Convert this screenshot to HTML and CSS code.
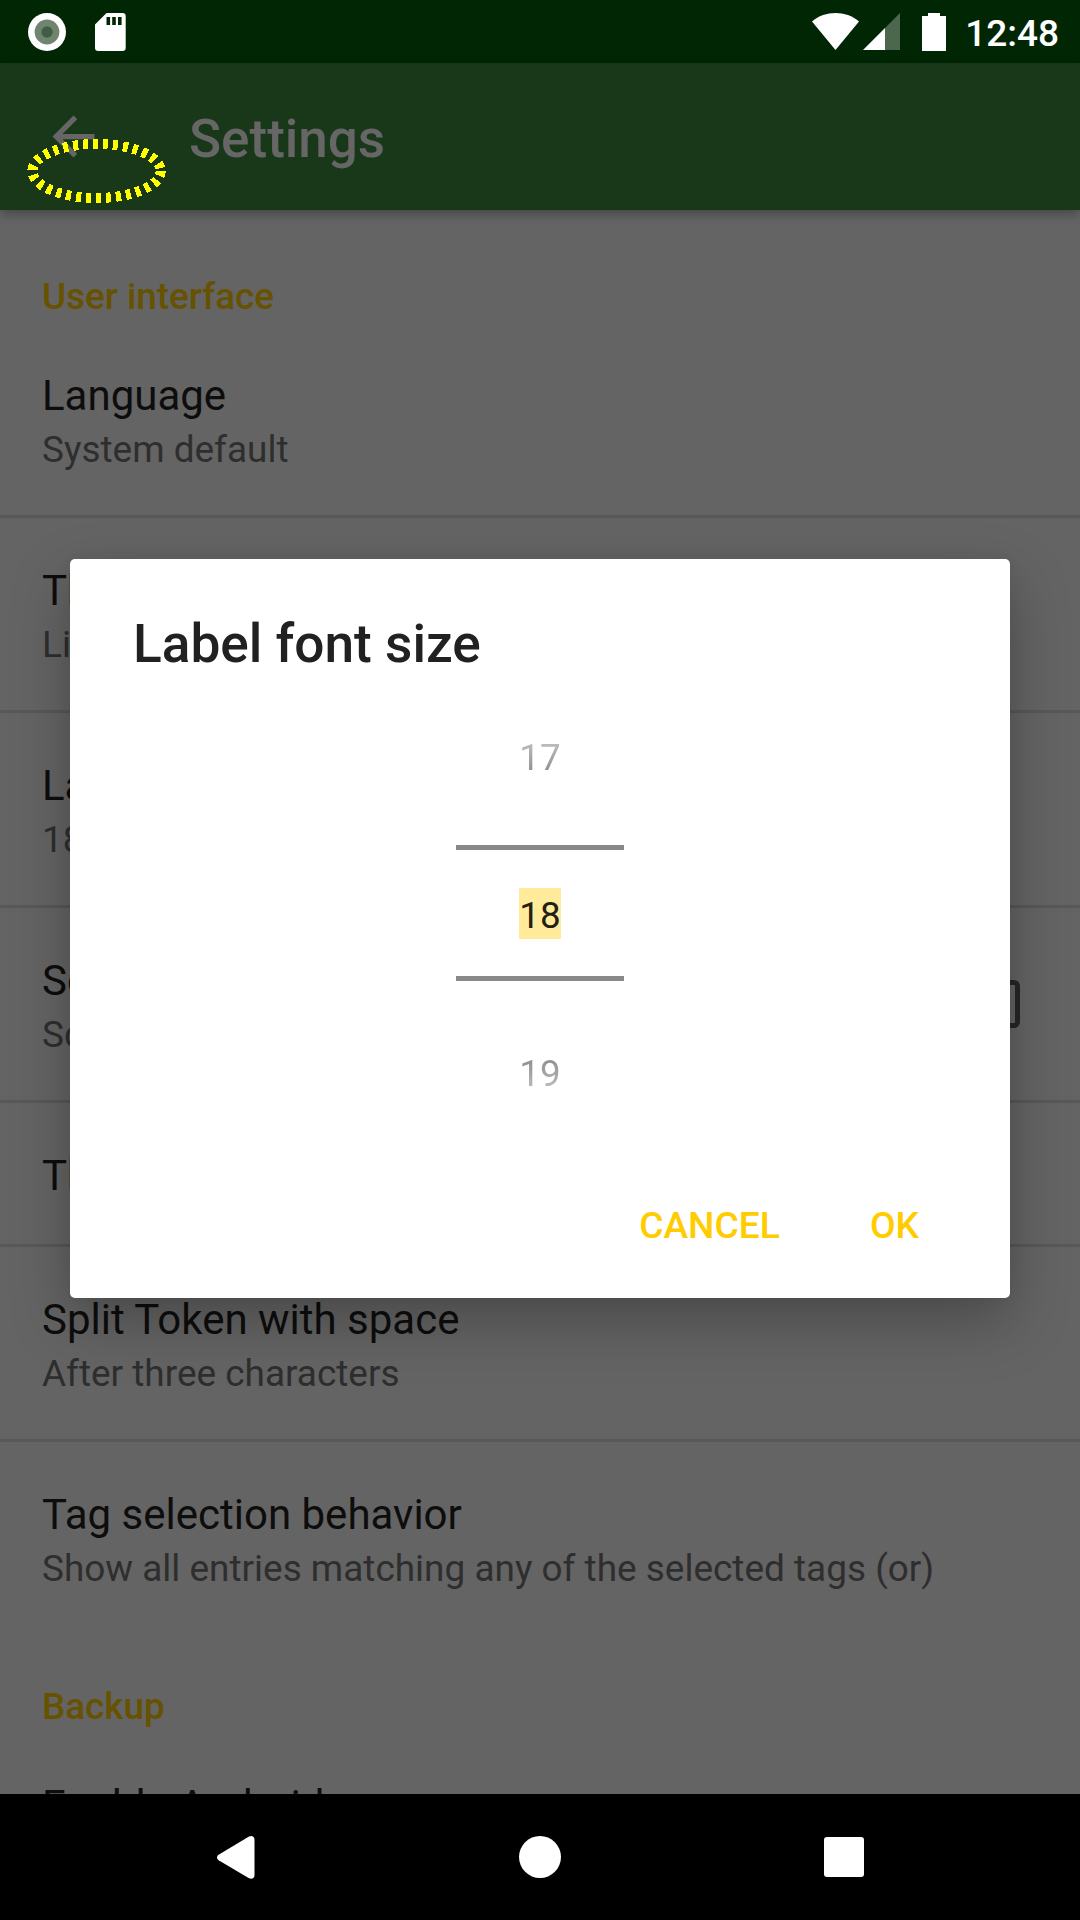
FILE: index.html
```html
<!DOCTYPE html>
<html lang="en">
<head>
<meta charset="utf-8">
<title>Settings</title>
<link rel="stylesheet" href="styles.css">
</head>
<body>
<div class="screen">
  <header class="status">
    <svg class="status-icon" width="38" height="38" viewBox="0 0 38 38"><circle cx="19" cy="19" r="19" fill="#fff"/><circle cx="19" cy="19" r="12.4" fill="#6f8571"/><circle cx="19" cy="19" r="5.7" fill="#425d44"/></svg>
    <svg class="status-icon sd" width="31" height="38" viewBox="0 0 31 38"><path fill="#fff" fill-rule="evenodd" d="M11.5 0H27.5a3.2 3.2 0 0 1 3.2 3.2V34.8a3.2 3.2 0 0 1-3.2 3.2H3.2A3.2 3.2 0 0 1 0 34.8V11.5ZM11.5 4v8h3.6V4ZM17.2 4v8h3.6V4ZM23 4v8h3.6V4Z"/></svg>
    <span class="spacer"></span>
    <svg class="wifi" width="47" height="37" viewBox="0 0 47 37"><path fill="#fff" d="M0 8.5C13-2.8 34-2.8 47 8.5L23.5 37Z"/></svg>
    <svg class="signal" width="37" height="37" viewBox="0 0 37 37"><path fill="#4d674f" d="M37 0V37H22V15Z"/><path fill="#fff" d="M0 37 22 15V37Z"/></svg>
    <svg class="battery" width="24" height="38" viewBox="0 0 24 38"><path fill="#fff" d="M6 0H18V3H24V38H0V3H6Z"/></svg>
    <span class="clock">12:48</span>
  </header>
  <div class="toolbar">
    <svg width="63" height="63" viewBox="0 0 24 24"><path fill="#666" d="M20 11H7.83l5.59-5.59L12 4l-8 8 8 8 1.41-1.41L7.83 13H20v-2z"/></svg>
    <h1 class="toolbar-title">Settings</h1>
  </div>
  <main class="list">
    <h2 class="category">User interface</h2>
    <div class="row first"><div class="name">Language</div><div class="summary">System default</div></div>
    <div class="row"><div class="name">Theme</div><div class="summary">Light</div></div>
    <div class="row"><div class="name">Label font size</div><div class="summary">18</div></div>
    <div class="row with-check"><div><div class="name">Scroll label</div><div class="summary">Scroll overlong labels</div></div><span class="check"></span></div>
    <div class="row single"><div class="name">Thumbnail size</div></div>
    <div class="row"><div class="name">Split Token with space</div><div class="summary">After three characters</div></div>
    <div class="row"><div class="name">Tag selection behavior</div><div class="summary">Show all entries matching any of the selected tags (or)</div></div>
    <h2 class="category second">Backup</h2>
    <div class="row first"><div class="name">Enable Android sync</div></div>
  </main>
  <nav class="nav">
    <svg class="nav-back" width="38" height="43" viewBox="0 0 38 43"><path fill="#fff" d="M1.6 18.8 31.6.8C34.5-.8 37.5.4 37.5 3.8V39C37.5 42.6 34.5 43.6 31.6 42L1.6 24.2C-.5 22.8-.5 20.2 1.6 18.8Z"/></svg>
    <span class="nav-home"></span>
    <span class="nav-recent"></span>
  </nav>
  <svg class="marker" width="140" height="66" viewBox="0 0 140 66"><ellipse cx="69.5" cy="33" rx="64.2" ry="27" fill="none" stroke="#ff0" stroke-width="10" stroke-dasharray="5 5" shape-rendering="crispEdges"/></svg>
  <section class="dialog">
    <h2 class="dialog-title">Label font size</h2>
    <div class="picker">
      <div class="option above">17</div>
      <div class="current"><span class="selected">18</span></div>
      <div class="option below">19</div>
    </div>
    <div class="actions"><span>CANCEL</span><span>OK</span></div>
  </section>
</div>
</body>
</html>
```
FILE: styles.css
```css
* { box-sizing: border-box; }
body { margin: 0; font-family: Roboto, sans-serif; }
h1, h2 { margin: 0; font-weight: 500; }
svg { display: block; flex: none; }

.screen {
  position: relative;
  display: flex;
  flex-direction: column;
  width: 1080px;
  height: 1920px;
  overflow: hidden;
  background: #646464;
}

.status {
  display: flex;
  align-items: center;
  height: 63px;
  padding: 0 21px 0 28px;
  background: #012604;
  color: #fff;
}
.sd { margin-left: 29px; }
.spacer { flex: 1; }
.signal { margin-left: 4px; }
.battery { margin-left: 22px; }
.clock {
  margin-left: 19px;
  font-size: 37px;
  font-weight: 500;
  line-height: 44px;
  padding-top: 4px;
}

.toolbar {
  z-index: 1;
  display: flex;
  align-items: center;
  height: 147px;
  padding-left: 42px;
  gap: 84px;
  background: #183819;
  box-shadow: 0 4px 10px rgba(0, 0, 0, .3);
}
.toolbar-title {
  font-size: 53px;
  line-height: 62px;
  padding-top: 5px;
  color: #666;
}

.list {
  height: 1584px;
  overflow: hidden;
}
.category {
  height: 110px;
  padding: 63px 42px 0;
  font-size: 36.85px;
  line-height: 48px;
  color: #665200;
}
.category.second {
  height: 96px;
  padding-top: 49px;
}
.row {
  height: 195px;
  padding: 48px 42px 0;
  border-top: 3px solid #585858;
  white-space: nowrap;
}
.row.first { border-top-color: transparent; }
.row.single { height: 144px; }
.row.with-check {
  display: flex;
  justify-content: space-between;
  padding-right: 60px;
}
.name {
  font-size: 42px;
  line-height: 50px;
  color: #0d0d0d;
}
.summary {
  margin-top: 5px;
  font-size: 36.95px;
  line-height: 48px;
  color: #2e2e2e;
}
.check {
  width: 48px;
  height: 48px;
  margin-top: 24px;
  border: 5px solid #262626;
  border-radius: 6px;
}

.nav {
  z-index: 1;
  display: flex;
  align-items: center;
  height: 126px;
  padding-left: 217px;
  background: #000;
}
.nav-home {
  width: 42px;
  height: 42px;
  margin-left: 264px;
  border-radius: 50%;
  background: #fff;
}
.nav-recent {
  width: 40px;
  height: 40px;
  margin-left: 263px;
  border-radius: 3px;
  background: #fff;
}

.marker {
  position: absolute;
  z-index: 2;
  left: 27px;
  top: 138px;
}

.dialog {
  position: absolute;
  left: 70px;
  top: 559px;
  width: 940px;
  height: 739px;
  padding: 53px 63px 0;
  border-radius: 5px;
  background: #fff;
  box-shadow: 0 24px 60px rgba(0, 0, 0, .26), 0 0 16px rgba(0, 0, 0, .06);
}
.dialog-title {
  font-size: 53.2px;
  line-height: 64px;
  color: #212121;
}
.picker {
  display: flex;
  flex-direction: column;
  align-items: center;
  margin-top: 58px;
  font-size: 36.75px;
  line-height: 48px;
}
.option {
  color: transparent;
  background-clip: text;
  -webkit-background-clip: text;
}
.above { background-image: linear-gradient(#bbb 20%, #909090 80%); }
.below { background-image: linear-gradient(#909090 20%, #bbb 80%); }
.current {
  display: flex;
  align-items: center;
  justify-content: center;
  width: 168px;
  height: 136px;
  margin: 63px 0 69px;
  border-top: 5px solid #888;
  border-bottom: 5px solid #888;
}
.selected {
  height: 51px;
  line-height: 56px;
  background: #ffeb99;
  color: #212118;
}
.actions {
  display: flex;
  justify-content: flex-end;
  gap: 90px;
  padding-right: 28px;
  margin-top: 103px;
  font-size: 37.2px;
  font-weight: 500;
  line-height: 48px;
  color: #fc0;
}
```
